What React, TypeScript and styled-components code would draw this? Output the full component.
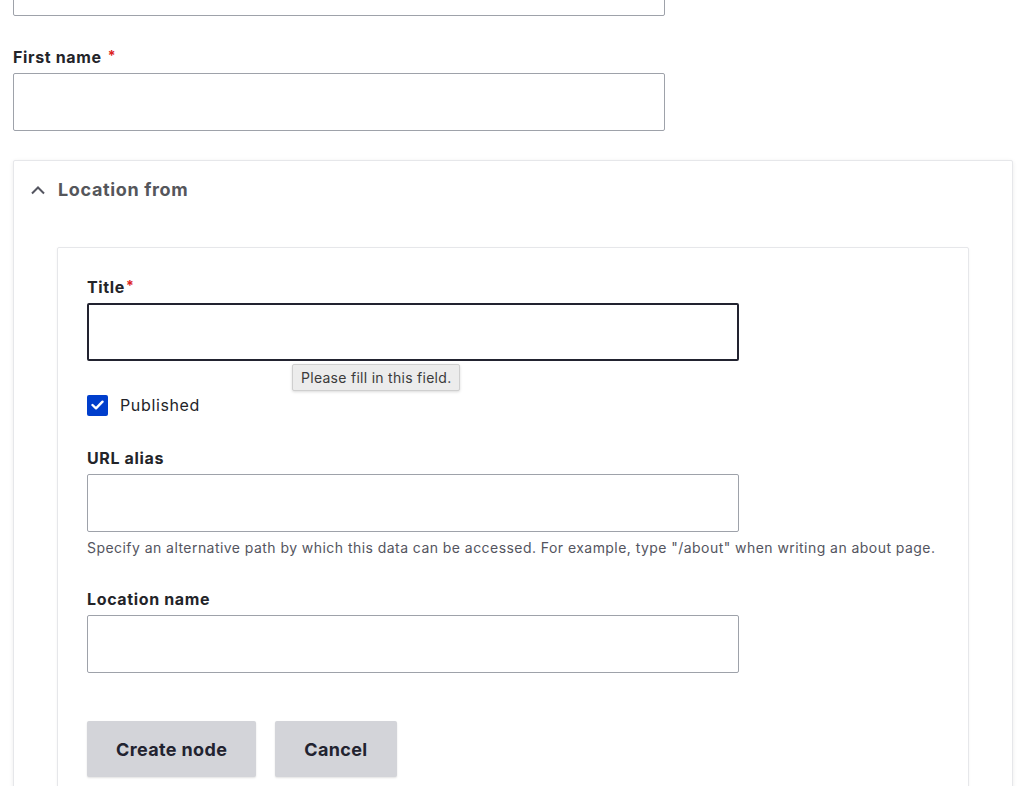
import { createGlobalStyle, styled } from "styled-components";

const GlobalStyle = createGlobalStyle`
  * {
    box-sizing: border-box;
  }
  body {
    margin: 0;
    background: #ffffff;
    font-family: Inter, "Noto Sans", "Liberation Sans", sans-serif;
    letter-spacing: 0.04em;
    color: #232429;
    overflow: hidden;
  }
`;

export default function App() {
  return (
    <>
      <GlobalStyle />
      <Page>
        <Field>
          <Input type="text" />
        </Field>
        <Field>
          <Label>
            First name<Required $spaced>*</Required>
          </Label>
          <Input type="text" />
        </Field>
        <Details>
          <Summary>
            <Chevron width="16" height="10" viewBox="0 0 16 10">
              <polyline
                points="2,8.5 8,2.5 14,8.5"
                fill="none"
                stroke="#545560"
                strokeWidth="2"
              />
            </Chevron>
            Location from
          </Summary>
          <DetailsBody>
            <Card>
              <Field>
                <Label>
                  Title<Required>*</Required>
                </Label>
                <InputWrap>
                  <Input type="text" $focused />
                  <Tooltip>Please fill in this field.</Tooltip>
                </InputWrap>
              </Field>
              <CheckRow>
                <CheckBox>
                  <svg width="13" height="10" viewBox="0 0 13 10">
                    <polyline
                      points="1.5,5 5,8.3 11.5,1.7"
                      fill="none"
                      stroke="#ffffff"
                      strokeWidth="2.4"
                      strokeLinecap="round"
                      strokeLinejoin="round"
                    />
                  </svg>
                </CheckBox>
                <CheckLabel>Published</CheckLabel>
              </CheckRow>
              <Field>
                <Label>URL alias</Label>
                <Input type="text" />
                <Description>
                  Specify an alternative path by which this data can be
                  accessed. For example, type "/about" when writing an about
                  page.
                </Description>
              </Field>
              <Field>
                <Label>Location name</Label>
                <Input type="text" />
              </Field>
              <Actions>
                <Button type="button">Create node</Button>
                <Button type="button">Cancel</Button>
              </Actions>
            </Card>
          </DetailsBody>
        </Details>
      </Page>
    </>
  );
}

const Page = styled.main`
  width: 1024px;
  margin-top: -42px;
  padding: 0 11px 0 13px;
  display: flex;
  flex-direction: column;
`;

const Field = styled.div`
  display: flex;
  flex-direction: column;
  align-items: flex-start;
  margin-bottom: 30px;
`;

const Label = styled.label`
  font-size: 16px;
  font-weight: 700;
  line-height: 20px;
  color: #232429;
  margin-bottom: 6px;
`;

const Required = styled.span<{ $spaced?: boolean }>`
  color: #dc2323;
  font-size: 14px;
  margin-left: ${(p) => (p.$spaced ? "6px" : "1px")};
  vertical-align: 2px;
`;

const InputWrap = styled.div`
  position: relative;
`;

const Input = styled.input<{ $focused?: boolean }>`
  width: 652px;
  height: 58px;
  padding: 0 16px;
  font: inherit;
  font-size: 16px;
  background: #ffffff;
  border: ${(p) => (p.$focused ? "2px solid #222330" : "1px solid #8e929c")};
  border-radius: 2px;
  outline: none;
  display: block;
  opacity: ${(p) => (p.$focused ? 1 : 0.85)};
`;

const Tooltip = styled.div`
  position: absolute;
  top: calc(100% + 3px);
  left: 205px;
  height: 27px;
  padding: 0 8px;
  display: flex;
  align-items: center;
  font-size: 14px;
  letter-spacing: 0.02em;
  color: #3b3b3b;
  background: #ececec;
  border: 1px solid #cfcfcf;
  border-radius: 2px;
  box-shadow: 0 1px 3px rgba(0, 0, 0, 0.15);
  white-space: nowrap;
`;

const Details = styled.section`
  width: 1000px;
  margin-top: -1px;
  border: 1px solid #e6e7ea;
  border-radius: 2px;
  box-shadow: 0 1px 4px rgba(0, 0, 0, 0.08);
  background: #ffffff;
`;

const Summary = styled.div`
  display: flex;
  align-items: center;
  gap: 12px;
  padding: 18px 16px 17px;
  font-size: 18px;
  font-weight: 700;
  line-height: 22px;
  color: #55565b;
`;

const Chevron = styled.svg`
  flex: none;
`;

const DetailsBody = styled.div`
  padding: 29px 43px 0 43px;
`;

const Card = styled.div`
  border: 1px solid #e6e7ea;
  border-radius: 2px;
  box-shadow: 0 1px 3px rgba(0, 0, 0, 0.05);
  padding: 28px 29px 40px 29px;
  display: flex;
  flex-direction: column;
`;

const CheckRow = styled.div`
  display: flex;
  align-items: center;
  gap: 12px;
  height: 24px;
  margin-top: 2px;
  margin-bottom: 31px;
`;

const CheckBox = styled.span`
  width: 21px;
  height: 21px;
  border-radius: 2px;
  background: #003ecc;
  display: flex;
  align-items: center;
  justify-content: center;
`;

const CheckLabel = styled.span`
  font-size: 16px;
  line-height: 20px;
  color: #232429;
`;

const Description = styled.p`
  margin: 6px 0 1px;
  font-size: 14px;
  line-height: 20px;
  letter-spacing: 0.032em;
  color: #545560;
  white-space: nowrap;
`;

const Actions = styled.div`
  display: flex;
  gap: 19px;
  margin-top: 18px;
`;

const Button = styled.button`
  height: 56px;
  padding: 0 29px;
  font: inherit;
  font-size: 18px;
  font-weight: 700;
  letter-spacing: 0.02em;
  color: #222330;
  background: #d3d4d9;
  border: none;
  border-radius: 2px;
  box-shadow: 0 1px 2px rgba(0, 0, 0, 0.12);
`;
